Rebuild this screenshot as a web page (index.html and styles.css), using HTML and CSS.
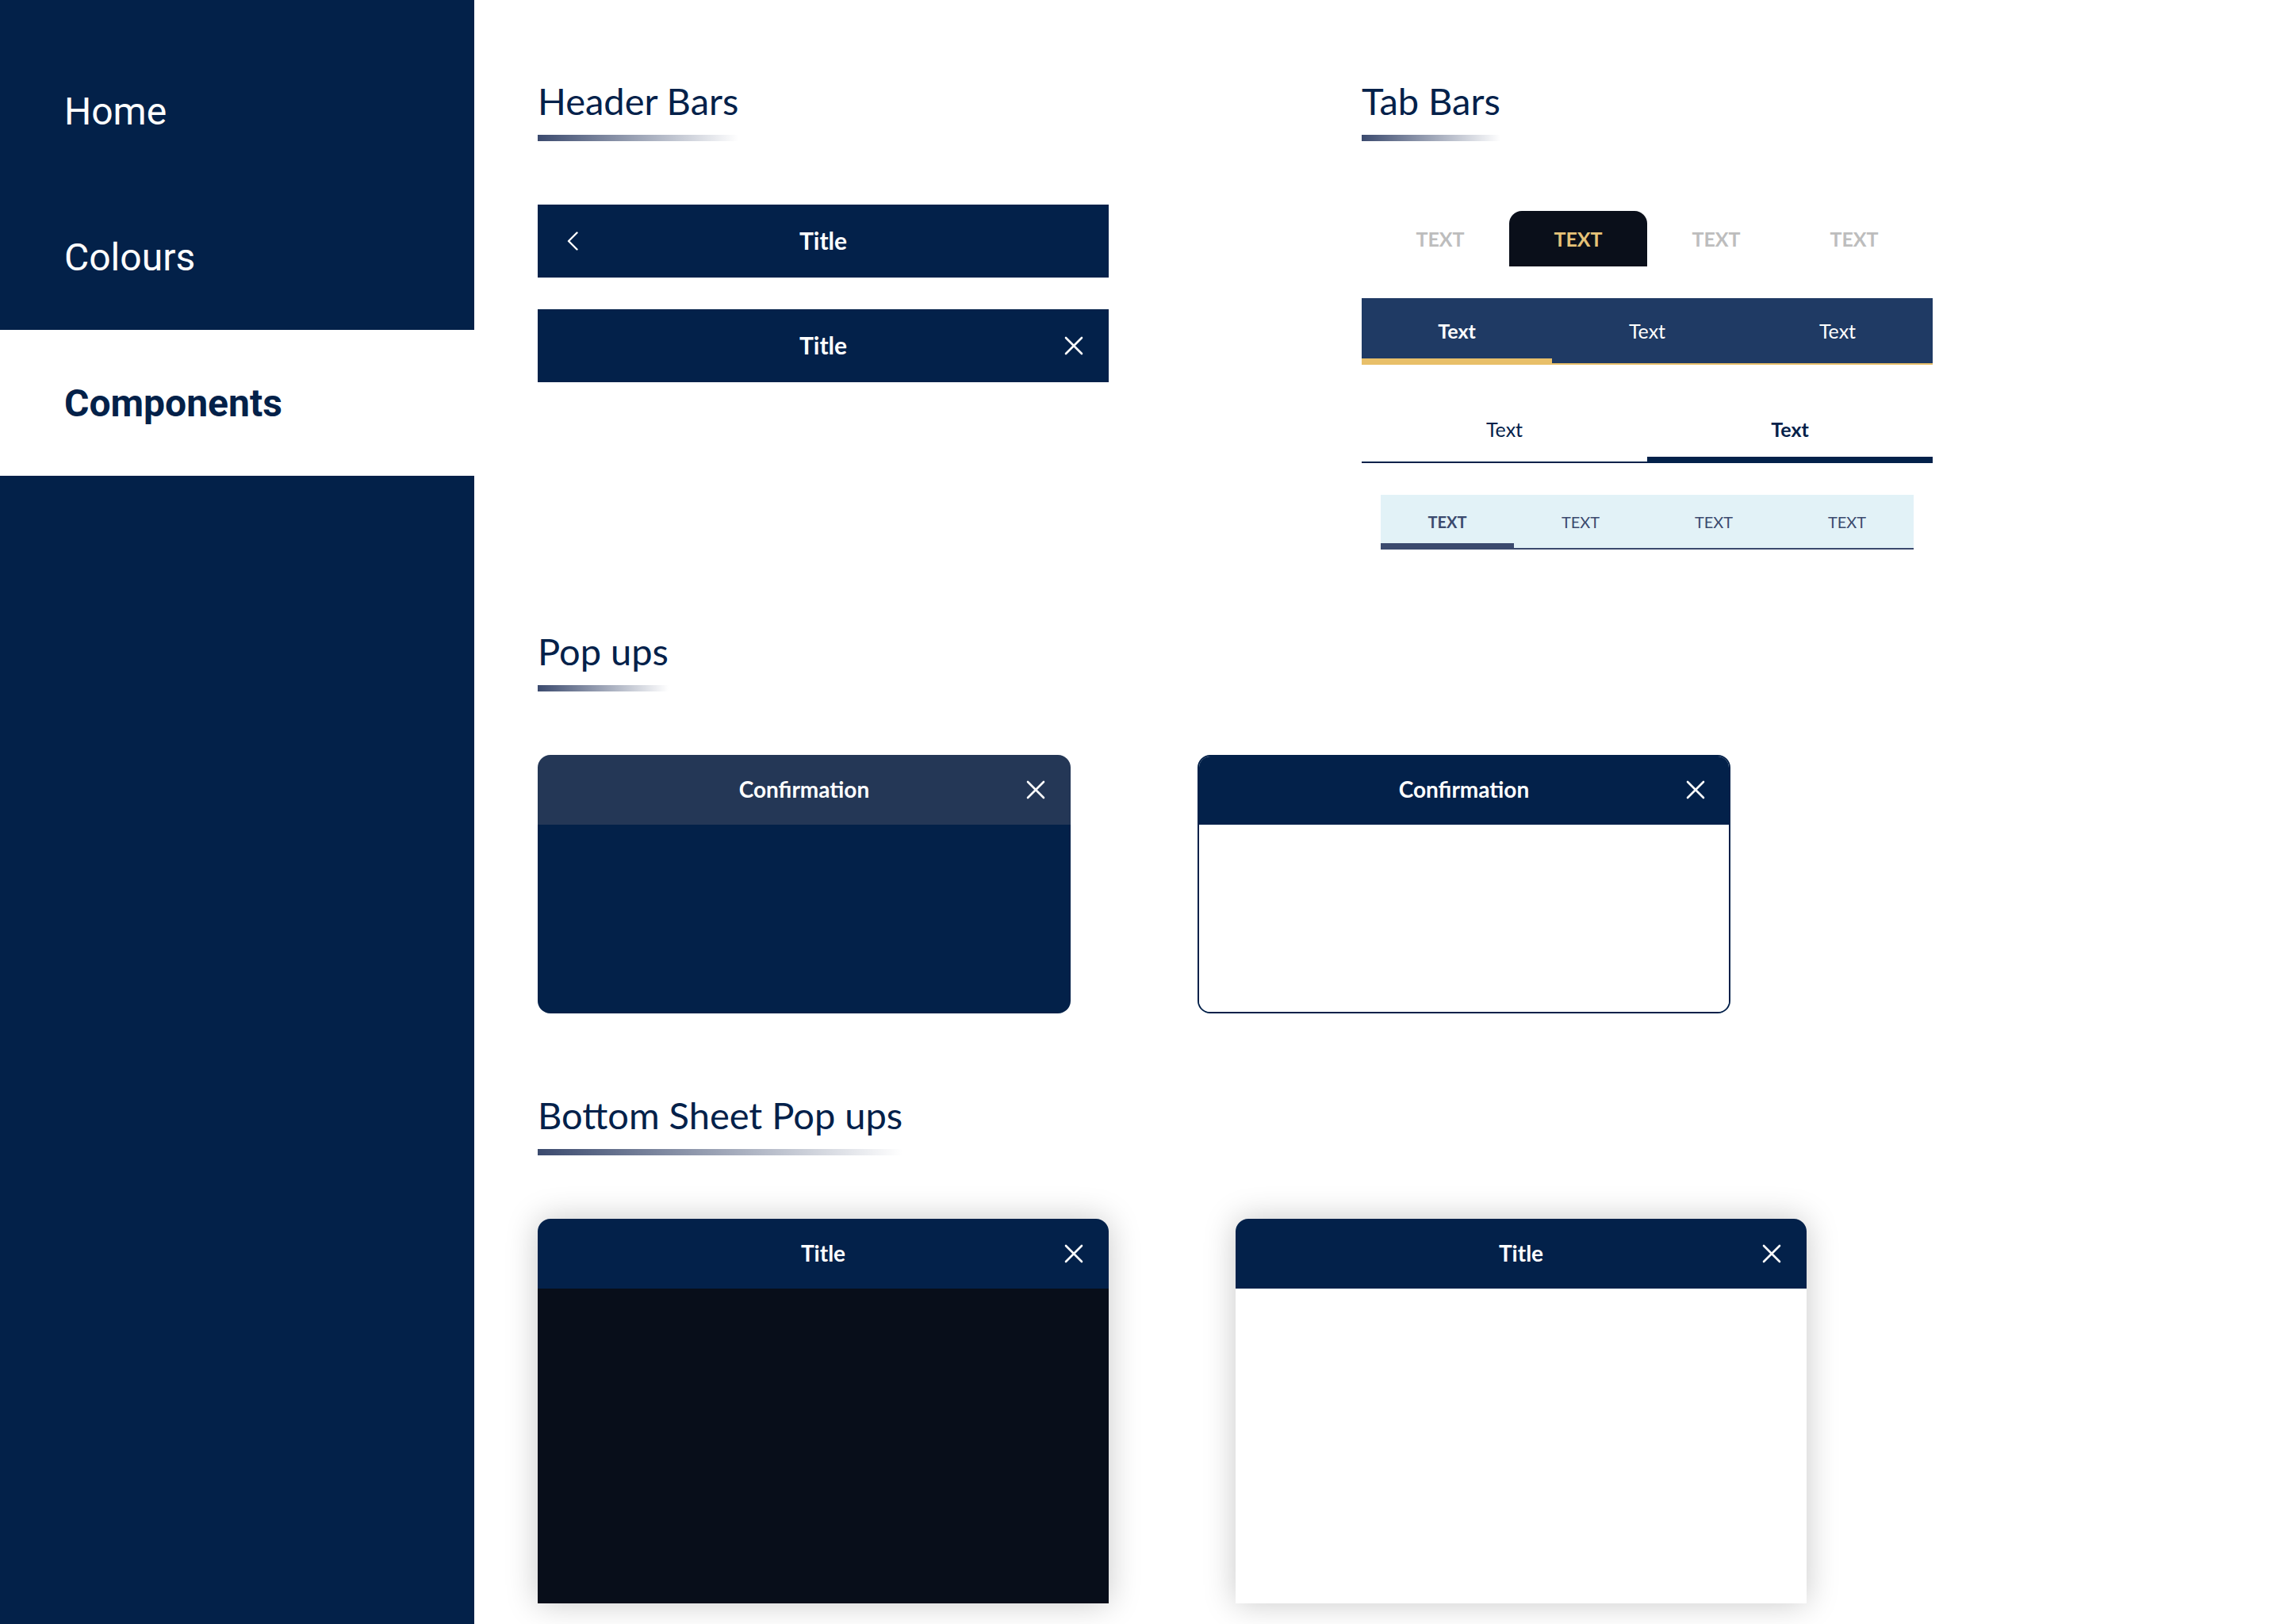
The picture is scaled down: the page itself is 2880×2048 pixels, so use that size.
FILE: index.html
```html
<!DOCTYPE html>
<html lang="en">
<head>
<meta charset="utf-8">
<title>Components</title>
<link rel="stylesheet" href="styles.css">
</head>
<body>
<aside class="sidebar">
  <nav class="nav">
    <a class="nav-item">Home</a>
    <a class="nav-item">Colours</a>
    <a class="nav-item active">Components</a>
  </nav>
</aside>
<main class="main">
  <div class="row">
    <section class="section col">
      <div class="heading"><h2 class="heading-text">Header Bars</h2><div class="heading-line"></div></div>
      <div class="stack-40">
        <div class="hbar">
          <div class="hbar-left">
            <svg class="chev" viewBox="0 0 14 24" width="14" height="24"><path d="M12.5 1.5 L2 12 L12.5 22.5" fill="none" stroke="#fff" stroke-width="2.4" stroke-linecap="round" stroke-linejoin="round"/></svg>
          </div>
          <div class="hbar-title">Title</div>
          <div class="hbar-right"></div>
        </div>
        <div class="hbar">
          <div class="hbar-left"></div>
          <div class="hbar-title">Title</div>
          <div class="hbar-right">
            <svg class="xicon" viewBox="0 0 24 24" width="24" height="24"><path d="M2 2 L22 22 M22 2 L2 22" fill="none" stroke="#fff" stroke-width="2.6" stroke-linecap="round"/></svg>
          </div>
        </div>
      </div>
    </section>
    <section class="section col">
      <div class="heading"><h2 class="heading-text">Tab Bars</h2><div class="heading-line"></div></div>
      <div class="stack-40">
        <div class="tabs-pill">
          <div class="pill">TEXT</div>
          <div class="pill active">TEXT</div>
          <div class="pill">TEXT</div>
          <div class="pill">TEXT</div>
        </div>
        <div class="tabs-gold">
          <div class="gtab active">Text</div>
          <div class="gtab">Text</div>
          <div class="gtab">Text</div>
        </div>
        <div class="tabs-line">
          <div class="ltab">Text</div>
          <div class="ltab active">Text</div>
        </div>
        <div class="tabs-light">
          <div class="lttab active">TEXT</div>
          <div class="lttab">TEXT</div>
          <div class="lttab">TEXT</div>
          <div class="lttab">TEXT</div>
        </div>
      </div>
    </section>
  </div>

  <section class="section">
    <div class="heading"><h2 class="heading-text">Pop ups</h2><div class="heading-line"></div></div>
    <div class="row-160">
      <div class="popup popup-dark">
        <div class="popup-head">
          <div></div>
          <div class="popup-title">Confirmation</div>
          <div class="head-right"><svg class="xicon" viewBox="0 0 24 24" width="24" height="24"><path d="M2 2 L22 22 M22 2 L2 22" fill="none" stroke="#fff" stroke-width="2.6" stroke-linecap="round"/></svg></div>
        </div>
        <div class="popup-body"></div>
      </div>
      <div class="popup popup-light">
        <div class="popup-head">
          <div></div>
          <div class="popup-title">Confirmation</div>
          <div class="head-right"><svg class="xicon" viewBox="0 0 24 24" width="24" height="24"><path d="M2 2 L22 22 M22 2 L2 22" fill="none" stroke="#fff" stroke-width="2.6" stroke-linecap="round"/></svg></div>
        </div>
        <div class="popup-body"></div>
      </div>
    </div>
  </section>

  <section class="section">
    <div class="heading"><h2 class="heading-text">Bottom Sheet Pop ups</h2><div class="heading-line"></div></div>
    <div class="row-160">
      <div class="sheet sheet-dark">
        <div class="sheet-head">
          <div></div>
          <div class="sheet-title">Title</div>
          <div class="head-right"><svg class="xicon" viewBox="0 0 24 24" width="24" height="24"><path d="M2 2 L22 22 M22 2 L2 22" fill="none" stroke="#fff" stroke-width="2.6" stroke-linecap="round"/></svg></div>
        </div>
        <div class="sheet-body"></div>
      </div>
      <div class="sheet sheet-light">
        <div class="sheet-head">
          <div></div>
          <div class="sheet-title">Title</div>
          <div class="head-right"><svg class="xicon" viewBox="0 0 24 24" width="24" height="24"><path d="M2 2 L22 22 M22 2 L2 22" fill="none" stroke="#fff" stroke-width="2.6" stroke-linecap="round"/></svg></div>
        </div>
        <div class="sheet-body"></div>
      </div>
    </div>
  </section>
</main>
</body>
</html>
```

FILE: styles.css
```css
* { box-sizing: border-box; }
html, body { margin: 0; padding: 0; }
body {
  display: flex;
  min-height: 2048px;
  background: #ffffff;
  font-family: "Lato", "Open Sans", sans-serif;
  overflow: hidden;
}

/* Sidebar */
.sidebar {
  width: 598px;
  flex: 0 0 598px;
  background: #032149;
  min-height: 2048px;
}
.nav {
  display: flex;
  flex-direction: column;
  padding-top: 48px;
}
.nav-item {
  height: 184px;
  display: flex;
  align-items: center;
  padding-left: 81px;
  font-family: "Roboto", sans-serif;
  font-size: 48px;
  color: #ffffff;
  font-weight: 400;
}
.nav-item.active {
  background: #ffffff;
  color: #032149;
  font-weight: 700;
}

/* Main */
.main {
  flex: 1;
  padding: 104px 0 0 80px;
  display: flex;
  flex-direction: column;
  gap: 105px;
}
.row {
  display: flex;
  gap: 319px;
}
.col { width: 720px; }

.section {
  display: flex;
  flex-direction: column;
  gap: 80px;
}
.heading {
  display: flex;
  flex-direction: column;
  width: max-content;
  gap: 19px;
}
.heading-text {
  margin: 0;
  font-size: 47px;
  line-height: 47px;
  font-weight: 400;
  color: #03214a;
}
.heading-line {
  height: 8px;
  width: 100%;
  background: linear-gradient(to right, #3b4a6e 0%, rgba(59,74,110,0.55) 45%, rgba(255,255,255,0) 100%);
}

.stack-40 {
  display: flex;
  flex-direction: column;
  gap: 40px;
}

/* Header bars */
.hbar {
  height: 92px;
  background: #03214a;
  display: grid;
  grid-template-columns: 1fr auto 1fr;
  align-items: center;
  color: #fff;
}
.hbar-left { padding-left: 37px; display: flex; align-items: center; }
.hbar-right { display: flex; justify-content: flex-end; padding-right: 32px; align-items: center; }
.hbar-title {
  font-size: 30px;
  font-weight: 700;
  margin-top: -2px;
}
.chev, .xicon { display: block; }

/* Tabs: pill */
.tabs-pill {
  display: flex;
  margin: 8px 12px 0;
  height: 70px;
}
.pill {
  flex: 1;
  display: flex;
  align-items: center;
  justify-content: center;
  font-size: 25px;
  font-weight: 700;
  color: #bdbdbd;
}
.pill.active {
  background: #0a0f1a;
  color: #e6c278;
  border-radius: 16px 16px 0 0;
}

/* Tabs: gold underline */
.tabs-gold {
  display: flex;
  background: #1f3a64;
  border-bottom: 2px solid #e8bf69;
}
.gtab {
  flex: 1;
  height: 82px;
  display: flex;
  align-items: center;
  justify-content: center;
  font-size: 25px;
  color: #fff;
}
.gtab.active {
  font-weight: 700;
  box-shadow: inset 0 -6px 0 #e8bf69;
}

/* Tabs: line */
.tabs-line {
  display: flex;
  border-bottom: 2px solid #03214a;
}
.ltab {
  flex: 1;
  height: 82px;
  display: flex;
  align-items: center;
  justify-content: center;
  font-size: 25px;
  color: #03214a;
}
.ltab.active {
  font-weight: 700;
  box-shadow: inset 0 -6px 0 #03214a;
}

/* Tabs: light */
.tabs-light {
  display: flex;
  margin: 0 24px;
  background: #e2f2f7;
  border-bottom: 2px solid #3b4a6e;
}
.lttab {
  flex: 1;
  height: 67px;
  display: flex;
  align-items: center;
  justify-content: center;
  font-size: 20px;
  color: #3b4a6e;
}
.lttab.active {
  font-weight: 700;
  box-shadow: inset 0 -6px 0 #3b4a6e;
}

/* Popups */
.row-160 {
  display: flex;
  gap: 160px;
}
.popup {
  width: 672px;
  height: 326px;
  border-radius: 16px;
  overflow: hidden;
  display: flex;
  flex-direction: column;
}
.popup-head {
  height: 88px;
  flex: 0 0 88px;
  display: grid;
  grid-template-columns: 1fr auto 1fr;
  align-items: center;
  color: #fff;
}
.head-right {
  display: flex;
  justify-content: flex-end;
  padding-right: 32px;
}
.popup-title {
  font-size: 28px;
  font-weight: 700;
  margin-top: -2px;
}
.popup-body { flex: 1; }
.popup-dark .popup-head { background: #243756; }
.popup-dark .popup-body { background: #032149; }
.popup-light {
  border: 2px solid #03214a;
}
.popup-light .popup-head { background: #03214a; margin: -2px -2px 0; }
.popup-light .popup-body { background: #fff; }

/* Bottom sheets */
.sheet {
  width: 720px;
  height: 485px;
  border-radius: 16px 16px 0 0;
  overflow: hidden;
  display: flex;
  flex-direction: column;
  box-shadow: 0 0 40px rgba(0, 0, 0, 0.22);
}
.sheet-head {
  height: 88px;
  flex: 0 0 88px;
  background: #03214a;
  display: grid;
  grid-template-columns: 1fr auto 1fr;
  align-items: center;
  color: #fff;
}
.sheet-title {
  font-size: 28px;
  font-weight: 700;
  margin-top: -2px;
}
.sheet-body { flex: 1; }
.sheet-dark .sheet-body { background: #080e1a; }
.sheet-light .sheet-body { background: #fff; }
```
